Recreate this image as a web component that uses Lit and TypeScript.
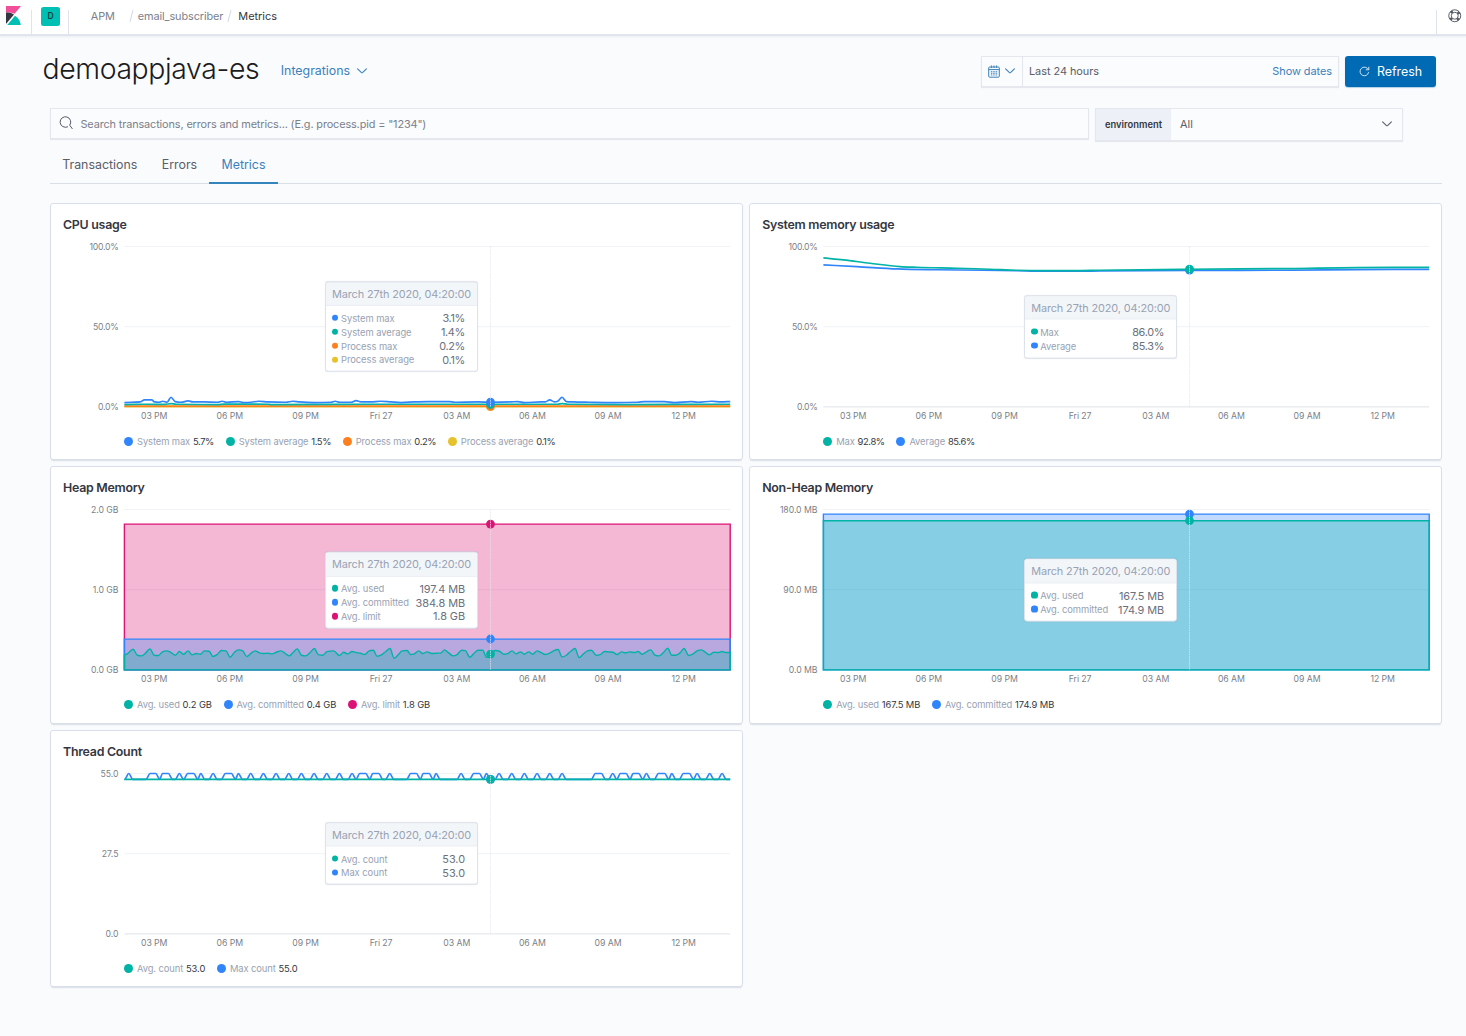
import { LitElement, html, svg, css } from "lit";
import { customElement, property } from "lit/decorators.js";

type Pt = [number, number];

interface Series {
  name: string;
  color: string;
  /** Points in plot pixels: x from the left edge, y up from the baseline. */
  points: Pt[];
  legend: string;
  tip: string;
  marker: number;
}

interface ChartData {
  title: string;
  ticks: string[];
  area?: boolean;
  axis?: boolean;
  series: Series[];
}

const W = 605.8;
const H = 160.4;
const LEFT = 73.4;
const TOP = 9.5;
const HOVER = 366.1;
const HOURS = ["03 PM", "06 PM", "09 PM", "Fri 27", "03 AM", "06 AM", "09 AM", "12 PM"];

const TEAL = "#00b3a4";
const BLUE = "#3185fc";
const PINK = "#db1374";
const ORANGE = "#fd8020";
const YELLOW = "#e6c22c";

/** Monotone cubic path through the given points. */
function smooth(pts: Pt[]): string {
  const n = pts.length;
  const p = pts.map(([x, y]) => [LEFT + x, TOP + H - y] as Pt);
  if (n < 3) return "M" + p.map((q) => q.join(",")).join("L");
  const h: number[] = [];
  const s: number[] = [];
  for (let i = 0; i < n - 1; i++) {
    h.push(p[i + 1][0] - p[i][0]);
    s.push((p[i + 1][1] - p[i][1]) / h[i]);
  }
  const m: number[] = [s[0]];
  for (let i = 1; i < n - 1; i++) {
    if (s[i - 1] * s[i] <= 0) m.push(0);
    else {
      const c = (s[i - 1] * h[i] + s[i] * h[i - 1]) / (h[i - 1] + h[i]);
      m.push(Math.sign(c) * Math.min(Math.abs(c), 2 * Math.abs(s[i - 1]), 2 * Math.abs(s[i])));
    }
  }
  m.push(s[n - 2]);
  let d = `M${p[0][0]},${p[0][1]}`;
  for (let i = 0; i < n - 1; i++) {
    const k = h[i] / 3;
    d += `C${(p[i][0] + k).toFixed(2)},${(p[i][1] + m[i] * k).toFixed(2)} ${(p[i + 1][0] - k).toFixed(2)},${(p[i + 1][1] - m[i + 1] * k).toFixed(2)} ${p[i + 1][0].toFixed(2)},${p[i + 1][1].toFixed(2)}`;
  }
  return d;
}

const flat = (y: number): Pt[] => [[0, y], [W, y]];

/** Converts third-of-a-pixel samples [x, height] into plot points. */
const thirds = (v: number[]): Pt[] => {
  const out: Pt[] = [];
  for (let i = 0; i < v.length; i += 2) out.push([Math.min(v[i] / 3, W), v[i + 1] / 3]);
  return out;
};

const heapUsed = thirds([
  0, 44, 10, 49, 26, 62, 39, 44, 51, 42, 60, 47, 77, 63, 89, 44, 102, 43, 114, 54, 127, 57, 140, 52, 153, 44, 165, 55,
  178, 47, 191, 57, 203, 45, 216, 49, 228, 47, 240, 57, 254, 56, 266, 40, 279, 47, 291, 58, 305, 57, 317, 38, 330, 53,
  343, 60, 355, 57, 367, 40, 380, 50, 392, 57, 405, 51, 418, 49, 431, 50, 443, 48, 456, 53, 469, 57, 482, 50, 494, 42,
  506, 52, 519, 63, 531, 44, 544, 42, 557, 52, 570, 64, 582, 46, 595, 44, 608, 55, 628, 57, 645, 43, 658, 53, 670, 48,
  683, 55, 696, 52, 708, 50, 721, 46, 734, 57, 747, 59, 758, 41, 771, 45, 785, 56, 797, 64, 809, 35, 823, 47, 833, 57,
  848, 58, 859, 46, 871, 49, 883, 57, 895, 49, 908, 54, 922, 49, 935, 50, 950, 51, 960, 60, 973, 51, 986, 42, 998, 46,
  1012, 59, 1023, 58, 1036, 38, 1049, 50, 1061, 59, 1075, 59, 1086, 38, 1100, 48, 1112, 58, 1125, 56, 1139, 47,
  1150, 49, 1163, 57, 1175, 48, 1188, 54, 1200, 47, 1213, 54, 1225, 47, 1238, 57, 1250, 52, 1263, 46, 1276, 50,
  1289, 58, 1301, 61, 1313, 39, 1326, 44, 1339, 56, 1352, 64, 1364, 37, 1377, 48, 1389, 57, 1401, 59, 1415, 44,
  1428, 46, 1440, 55, 1453, 54, 1466, 53, 1478, 46, 1491, 54, 1503, 51, 1516, 54, 1529, 52, 1541, 55, 1554, 47,
  1566, 54, 1579, 60, 1592, 44, 1604, 42, 1617, 52, 1630, 65, 1642, 44, 1654, 44, 1667, 51, 1679, 64, 1693, 43,
  1706, 48, 1718, 57, 1731, 60, 1743, 53, 1755, 45, 1768, 53, 1781, 52, 1793, 55, 1806, 52, 1818, 52,
]);

const cpuMax = thirds([
  0, 13, 20, 14, 48, 15, 60, 21, 82, 21, 90, 15, 104, 14, 115, 17, 128, 14, 140, 29, 152, 16, 170, 14, 191, 18, 205, 15,
  240, 15, 280, 14, 293, 17, 306, 14, 343, 16, 356, 13, 380, 14, 403, 17, 430, 15, 485, 14, 505, 17, 525, 15, 570, 13,
  620, 14, 632, 17, 645, 14, 680, 14, 695, 19, 710, 15, 740, 15, 768, 17, 800, 15, 830, 13, 870, 15, 910, 16, 975, 16,
  990, 14, 1060, 15, 1100, 14, 1160, 15, 1180, 16, 1200, 13, 1250, 15, 1263, 15, 1276, 21, 1290, 15, 1300, 17, 1313, 29,
  1326, 16, 1345, 15, 1395, 14, 1470, 13, 1540, 14, 1560, 16, 1600, 16, 1620, 16, 1650, 13, 1700, 16, 1720, 14,
  1762, 17, 1790, 15, 1818, 16,
]);

const cpuAvg = thirds([0, 7, 60, 8, 120, 7.5, 140, 10, 155, 8, 280, 7, 300, 8.5, 430, 8, 440, 7, 760, 8, 980, 8, 1300, 8, 1313, 10, 1330, 8, 1500, 7, 1818, 8]);

const memMax = thirds([
  0, 447, 60, 441, 140, 431, 230, 421, 280, 419, 400, 416, 500, 413, 580, 410, 660, 409, 750, 409, 830, 410, 1098, 413,
  1400, 415, 1600, 418, 1818, 418.5,
]);
const memAvg = thirds([
  0, 426, 100, 421, 220, 414, 340, 411.5, 480, 410, 580, 408.5, 660, 407, 750, 407, 830, 408, 1098, 409.5, 1400, 410,
  1600, 412, 1818, 412.5,
]);

/** Peaks of the maximum thread count, [start, end] in thirds of a pixel. */
const threadPeaks: Pt[] = [
  [13, 13], [77, 94], [114, 132], [165, 165], [190, 208], [229, 229], [266, 266], [303, 321], [342, 342], [379, 379],
  [417, 417], [455, 455], [493, 493], [531, 531], [569, 569], [607, 607], [645, 645], [683, 683], [706, 724],
  [745, 763], [796, 796], [859, 876], [896, 914], [935, 935], [1010, 1010], [1048, 1065], [1086, 1086], [1124, 1124],
  [1162, 1162], [1200, 1200], [1238, 1238], [1276, 1276], [1313, 1313], [1413, 1431], [1465, 1465], [1488, 1505],
  [1526, 1543], [1566, 1566], [1602, 1621], [1642, 1642], [1677, 1695], [1718, 1718], [1756, 1756], [1793, 1793],
];

const threadMax: Pt[] = (() => {
  const lo = 154.6;
  const hi = H;
  const out: Pt[] = [[0, lo]];
  for (const [a, b] of threadPeaks) {
    const start = a / 3 - 4;
    if (start > out[out.length - 1][0] + 0.3) out.push([start, lo]);
    out.push([a / 3, hi]);
    if (b > a) out.push([b / 3, hi]);
    out.push([b / 3 + 4, lo]);
  }
  out.push([W, lo]);
  return out;
})();

const CHARTS: ChartData[] = [
  {
    title: "CPU usage",
    ticks: ["100.0%", "50.0%", "0.0%"],
    axis: true,
    series: [
      { name: "System max", color: BLUE, points: cpuMax, legend: "5.7%", tip: "3.1%", marker: 4.8 },
      { name: "System average", color: TEAL, points: cpuAvg, legend: "1.5%", tip: "1.4%", marker: 2.4 },
      { name: "Process max", color: ORANGE, points: flat(0.7), legend: "0.2%", tip: "0.2%", marker: 0.5 },
      { name: "Process average", color: YELLOW, points: flat(0.2), legend: "0.1%", tip: "0.1%", marker: 0.3 },
    ],
  },
  {
    title: "System memory usage",
    ticks: ["100.0%", "50.0%", "0.0%"],
    axis: true,
    series: [
      { name: "Max", color: TEAL, points: memMax, legend: "92.8%", tip: "86.0%", marker: 137.7 },
      { name: "Average", color: BLUE, points: memAvg, legend: "85.6%", tip: "85.3%", marker: 136.8 },
    ],
  },
  {
    title: "Heap Memory",
    ticks: ["2.0 GB", "1.0 GB", "0.0 GB"],
    area: true,
    series: [
      { name: "Avg. used", color: TEAL, points: heapUsed, legend: "0.2 GB", tip: "197.4 MB", marker: 15.8 },
      { name: "Avg. committed", color: BLUE, points: flat(30.8), legend: "0.4 GB", tip: "384.8 MB", marker: 30.9 },
      { name: "Avg. limit", color: PINK, points: flat(145.8), legend: "1.8 GB", tip: "1.8 GB", marker: 145.8 },
    ],
  },
  {
    title: "Non-Heap Memory",
    ticks: ["180.0 MB", "90.0 MB", "0.0 MB"],
    area: true,
    series: [
      { name: "Avg. used", color: TEAL, points: flat(149.2), legend: "167.5 MB", tip: "167.5 MB", marker: 149.2 },
      { name: "Avg. committed", color: BLUE, points: flat(155.8), legend: "174.9 MB", tip: "174.9 MB", marker: 155.8 },
    ],
  },
  {
    title: "Thread Count",
    ticks: ["55.0", "27.5", "0.0"],
    axis: true,
    series: [
      { name: "Avg. count", color: TEAL, points: flat(154.6), legend: "53.0", tip: "53.0", marker: 154.6 },
      { name: "Max count", color: BLUE, points: threadMax, legend: "55.0", tip: "53.0", marker: 154.6 },
    ],
  },
];

/** Percentages are set a little tighter than byte sizes and counts. */
const tight = (text: string) => (text.endsWith("%") ? "tight" : "");

@customElement("metric-chart")
export class MetricChart extends LitElement {
  @property({ attribute: false }) data!: ChartData;

  static styles = css`
    :host {
      display: flex;
      flex-direction: column;
      box-sizing: border-box;
      border: 1px solid #d9dfea;
      border-radius: 3px;
      background: #fff;
      box-shadow: 0 1.5px 1.5px -1px rgba(152, 162, 179, 0.35);
    }
    .title {
      margin: 0;
      height: 33px;
      padding: 11px 12px 0;
      box-sizing: border-box;
      font-size: 12.4px;
      letter-spacing: -0.27px;
      line-height: 20px;
      font-weight: 600;
      color: #343741;
    }
    .plot {
      position: relative;
      height: 190px;
    }
    .canvas {
      display: block;
      width: 100%;
      height: 190px;
      overflow: visible;
    }
    .grid {
      stroke: #f0f2f5;
      stroke-width: 1;
    }
    .axis {
      stroke: #e0e2e6;
      stroke-width: 1;
    }
    .cursor {
      stroke: #e3e6ea;
      stroke-opacity: 0.75;
      stroke-width: 1;
      stroke-dasharray: 1.6 0.8;
    }
    .tick {
      font-size: 8.7px;
      letter-spacing: -0.05px;
      fill: #7b7f88;
    }
    .tight {
      letter-spacing: -0.3px;
    }
    .legend {
      display: flex;
      gap: 11.7px;
      padding-left: 73px;
      height: 20px;
      margin-top: 4.6px;
      align-items: center;
      font-size: 9.4px;
      letter-spacing: -0.1px;
      color: #98a2b3;
      white-space: nowrap;
    }
    .entry {
      display: flex;
      align-items: center;
    }
    .dot {
      width: 9px;
      height: 9px;
      border-radius: 50%;
      margin-right: 4px;
    }
    .amount {
      color: #343741;
      margin-left: 2.8px;
    }
    .amount.tight {
      letter-spacing: -0.38px;
    }
    .tip {
      position: absolute;
      box-sizing: border-box;
      top: 90px;
      left: 274px;
      width: 153px;
      transform: translateY(-50%);
      border: 1px solid #dde3ec;
      border-radius: 3px;
      background: #fff;
      box-shadow: 0 0 1px rgba(152, 162, 179, 0.3);
    }
    .when {
      height: 23.5px;
      box-sizing: border-box;
      border-bottom: 1px solid #dce2eb;
      background: #f3f6f9;
      border-radius: 2px 2px 0 0;
      padding-left: 6px;
      font-size: 10.9px;
      letter-spacing: -0.11px;
      line-height: 23.5px;
      color: #98a2b3;
      white-space: nowrap;
    }
    .rows {
      padding: 5px 12px 4.5px 6px;
    }
    .row {
      display: flex;
      align-items: center;
      height: 13.9px;
      font-size: 9.4px;
      letter-spacing: -0.05px;
      color: #98a2b3;
    }
    .row .dot {
      width: 6.4px;
      height: 6.4px;
      margin-right: 2.6px;
    }
    .value {
      margin-left: auto;
      font-size: 10.9px;
      color: #69707d;
    }
  `;

  private drawSeries(s: Series) {
    const d = smooth(s.points);
    if (!this.data.area) {
      return svg`<path d=${d} fill="none" stroke=${s.color} stroke-width="1.7" stroke-linejoin="round"></path>`;
    }
    const base = TOP + H;
    return svg`<path d=${`${d}L${LEFT + W},${base}L${LEFT},${base}Z`} fill=${s.color} fill-opacity="0.3"
      stroke=${s.color} stroke-width="1.4"></path>`;
  }

  render() {
    const { title, ticks, series, axis } = this.data;
    const back = [...series].reverse();
    return html`
      <h3 class="title">${title}</h3>
      <div class="plot">
        <svg class="canvas">
          ${ticks.map((t, i) => {
            const y = TOP + (H * i) / 2;
            return svg`
              ${i < 2 || axis
                ? svg`<line class=${i < 2 ? "grid" : "axis"} x1=${LEFT} x2=${LEFT + W} y1=${y} y2=${y}></line>`
                : ""}
              <text class="tick ${tight(t)}" x=${LEFT - 6} y=${y + 3.2} text-anchor="end">${t}</text>`;
          })}
          ${HOURS.map(
            (t, i) =>
              svg`<text class="tick" x=${LEFT + 29.8 + i * 75.64} y=${TOP + H + 12.5} text-anchor="middle">${t}</text>`,
          )}
          ${back.map((s) => this.drawSeries(s))}
          ${back.map(
            (s) => svg`<circle cx=${LEFT + HOVER} cy=${TOP + H - s.marker} r="4.4" fill=${s.color}></circle>`,
          )}
          <line class="cursor" x1=${LEFT + HOVER} x2=${LEFT + HOVER} y1=${TOP} y2=${TOP + H}></line>
        </svg>
        <div class="tip">
          <div class="when">March 27th 2020, 04:20:00</div>
          <div class="rows">
            ${series.map(
              (s) => html`<div class="row">
                <span class="dot" style="background:${s.color}"></span>${s.name}<span class="value ${tight(s.tip)}"
                  >${s.tip}</span
                >
              </div>`,
            )}
          </div>
        </div>
      </div>
      <div class="legend">
        ${series.map(
          (s) => html`<div class="entry">
            <span class="dot" style="background:${s.color}"></span>${s.name}<span class="amount ${tight(s.legend)}"
              >${s.legend}</span
            >
          </div>`,
        )}
      </div>
    `;
  }
}

const chevron = html`<svg class="chev" viewBox="0 0 10 6">
  <path d="M0.6 0.8 L4.2 4.4 Q5 5.1 5.8 4.4 L9.4 0.8" fill="none" stroke="currentColor" stroke-width="1.1" stroke-linecap="round" />
</svg>`;

@customElement("app-root")
export class AppRoot extends LitElement {
  static styles = css`
    :host {
      display: block;
      width: 1466px;
      height: 1036px;
      overflow: hidden;
      background: #fafbfd;
      font-family: Inter, "Liberation Sans", sans-serif;
      color: #343741;
    }
    .top {
      display: flex;
      align-items: flex-start;
      height: 35.5px;
      box-sizing: border-box;
      background: #fff;
      border-bottom: 2px solid #e0e4ed;
      box-shadow: 0 1px 2px rgba(152, 162, 179, 0.15);
    }
    .logo {
      width: 15px;
      height: 19px;
      margin: 5.5px 10.5px 0 5.5px;
    }
    .rule {
      width: 1px;
      height: 24px;
      margin-top: 9.5px;
      background: #dfe3eb;
    }
    .space {
      width: 19px;
      height: 19px;
      margin: 6.6px 8px 0 9px;
      border-radius: 2.5px;
      background: #00bfb3;
      color: #10463f;
      font-size: 8.6px;
      font-weight: 600;
      line-height: 19px;
      text-align: center;
    }
    .crumbs {
      display: flex;
      align-items: center;
      height: 32px;
      padding-left: 21.8px;
      font-size: 10.9px;
      letter-spacing: -0.1px;
      color: #7b818c;
    }
    .slash {
      width: 1px;
      height: 12px;
      background: #d3dae6;
      transform: rotate(15deg);
    }
    .slash.one {
      margin: 0 6px 0 16px;
    }
    .slash.two {
      margin: 0 8px 0 6px;
    }
    .here {
      color: #343741;
      letter-spacing: 0;
    }
    .help {
      margin: 9px 4.2px 0 11px;
      width: 13.5px;
      height: 13.5px;
    }
    .push {
      margin-left: auto;
    }
    .page {
      padding: 20px 24px 0 50px;
    }
    .head {
      display: flex;
      align-items: center;
      height: 31px;
    }
    .name {
      margin: -4px 0 0 -7.5px;
      font-size: 28.4px;
      letter-spacing: -0.38px;
      line-height: 34px;
      font-weight: 300;
      color: #1a1c21;
      white-space: nowrap;
    }
    .chev {
      width: 10px;
      height: 6px;
      flex: none;
    }
    .integrations {
      display: flex;
      align-items: center;
      gap: 7px;
      margin: -0.5px 0 0 21.5px;
      font-size: 12.4px;
      color: #3a80bd;
    }
    .picker {
      display: flex;
      align-items: stretch;
      box-sizing: border-box;
      width: 358px;
      height: 31px;
      margin-left: auto;
      border: 1px solid #e4e8ee;
      background: #fbfcfd;
      box-shadow: 0 1px 1px rgba(152, 162, 179, 0.2);
      font-size: 10.9px;
    }
    .quick {
      display: flex;
      align-items: center;
      gap: 4.5px;
      width: 41px;
      padding-left: 6px;
      box-sizing: border-box;
      border-right: 1px solid #e4e8ee;
      color: #3a80bd;
    }
    .cal {
      width: 12px;
      height: 13px;
    }
    .range {
      display: flex;
      flex: 1;
      align-items: center;
      justify-content: space-between;
      padding: 0 6px;
      letter-spacing: -0.04px;
      color: #5a5e68;
    }
    .link {
      color: #3a80bd;
    }
    .refresh {
      display: flex;
      align-items: center;
      justify-content: center;
      gap: 7px;
      width: 91px;
      height: 31px;
      margin: 0 6px 0 6px;
      border-radius: 3px;
      background: #006bb4;
      box-shadow: 0 1px 1px rgba(0, 107, 180, 0.3);
      color: #fff;
      font-size: 12.4px;
    }
    .spin {
      width: 11px;
      height: 11px;
    }
    .filters {
      display: flex;
      align-items: flex-start;
      gap: 6px;
      margin-top: 21.5px;
      height: 33px;
    }
    .search {
      display: flex;
      align-items: center;
      gap: 8px;
      box-sizing: border-box;
      width: 1039px;
      height: 31px;
      padding-left: 7.5px;
      border: 1px solid #e4e8ee;
      background: #fbfcfd;
      box-shadow: 0 1px 1px rgba(152, 162, 179, 0.2);
      font-size: 10.9px;
      letter-spacing: -0.13px;
      color: #7a808b;
    }
    .glass {
      width: 14px;
      height: 14px;
      margin-top: -1px;
    }
    .env {
      display: flex;
      align-items: stretch;
      box-sizing: border-box;
      width: 308.3px;
      height: 32.5px;
      border: 1px solid #e4e8ee;
      background: #fbfcfd;
      box-shadow: 0 1px 1px rgba(152, 162, 179, 0.2);
      font-size: 10.9px;
    }
    .label {
      display: flex;
      align-items: center;
      justify-content: center;
      width: 75px;
      background: #edf0f6;
      font-size: 9.4px;
      font-weight: 600;
    }
    .choice {
      display: flex;
      flex: 1;
      align-items: center;
      justify-content: space-between;
      padding: 0 10px 0 9px;
      color: #5a5e68;
    }
    .tabs {
      display: flex;
      height: 42.7px;
      width: 1392px;
      box-sizing: border-box;
      border-bottom: 1px solid #dadfe6;
      font-size: 12.4px;
      line-height: 48px;
      color: #5a5e68;
    }
    .tab {
      padding: 0 12.2px;
      height: 42.7px;
      box-sizing: border-box;
    }
    .tab.on {
      color: #3a80bd;
      border-bottom: 2px solid #3383bd;
    }
    .cards {
      display: grid;
      width: 1392px;
      grid-template-columns: 1fr 1fr;
      grid-auto-rows: 257.4px;
      gap: 6px 6.4px;
      margin-top: 19.1px;
    }
  `;

  render() {
    return html`
      <header class="top">
        <svg class="logo" viewBox="0 0 15 19">
          <path d="M0 0H15L8.6 7.8Q4.6 6 0 6.6Z" fill="#f04e98" />
          <path d="M0 6.6Q4.6 6 8 8.4L0 18Z" fill="#343741" />
          <path d="M9 9.8Q14 13 14.8 19H1.2Z" fill="#00bfb3" />
        </svg>
        <div class="rule"></div>
        <div class="space">D</div>
        <div class="rule"></div>
        <nav class="crumbs">
          <span>APM</span><i class="slash one"></i><span>email_subscriber</span><i class="slash two"></i
          ><span class="here">Metrics</span>
        </nav>
        <div class="rule push"></div>
        <svg class="help" viewBox="0 0 14 14" fill="none" stroke="#535966">
          <circle cx="7" cy="7" r="6.2" stroke-width="1" />
          <circle cx="7" cy="7" r="3.6" stroke-width="1" />
          <circle cx="7" cy="7" r="4.9" stroke-width="2.6" stroke-dasharray="2.6 5.1" stroke-dashoffset="-2.55" />
        </svg>
      </header>
      <main class="page">
        <div class="head">
          <h1 class="name">demoappjava-es</h1>
          <div class="integrations"><span>Integrations</span>${chevron}</div>
          <div class="picker">
            <div class="quick">
              <svg class="cal" viewBox="0 0 12 13" fill="none" stroke="currentColor">
                <rect x="0.7" y="2" width="10.6" height="10.2" rx="1" />
                <path d="M0.7 4.6H11.3" />
                <path d="M3.4 0.4V3M6 0.4V3M8.6 0.4V3" stroke-width="0.9" />
                <path d="M3.4 6V10.6M5.2 6V10.6M6.9 6V10.6M8.7 6V10.6" stroke-width="0.9" stroke-dasharray="1.3 0.4" />
              </svg>
              ${chevron}
            </div>
            <div class="range"><span>Last 24 hours</span><span class="link">Show dates</span></div>
          </div>
          <div class="refresh">
            <svg class="spin" viewBox="0 0 11 11" fill="none" stroke="#cfe2f0">
              <path d="M9.6 6.2A4.3 4.3 0 1 1 8.4 2.4L9.6 3.5" />
              <path d="M9.8 0.8V3.8H6.8" />
            </svg>
            <span>Refresh</span>
          </div>
        </div>
        <div class="filters">
          <div class="search">
            <svg class="glass" viewBox="0 0 14 14" fill="none" stroke="#535966" stroke-linecap="round">
              <path d="M8.6 10.9A5.3 5.3 0 1 1 10.7 9.2L13.2 12.6" />
            </svg>
            <span>Search transactions, errors and metrics... (E.g. process.pid = "1234")</span>
          </div>
          <div class="env">
            <div class="label">environment</div>
            <div class="choice"><span>All</span>${chevron}</div>
          </div>
        </div>
        <nav class="tabs">
          <span class="tab">Transactions</span><span class="tab">Errors</span><span class="tab on">Metrics</span>
        </nav>
        <section class="cards">${CHARTS.map((c) => html`<metric-chart .data=${c}></metric-chart>`)}</section>
      </main>
    `;
  }
}
